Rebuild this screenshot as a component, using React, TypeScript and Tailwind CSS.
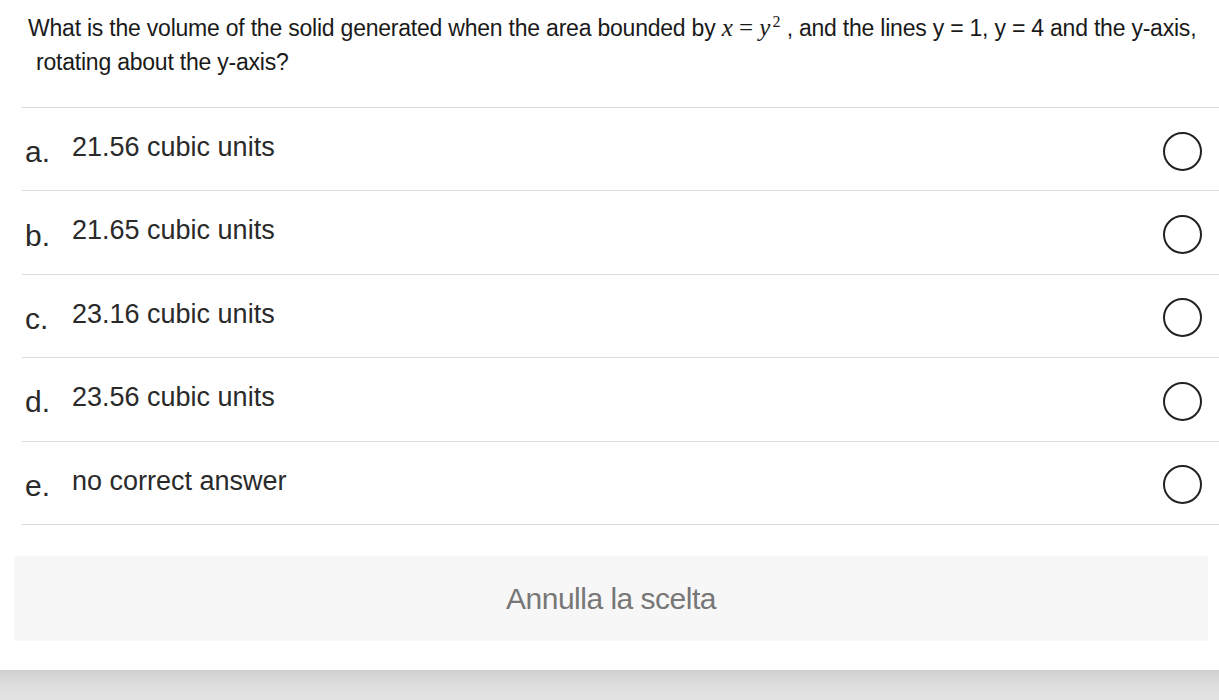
import React from 'react';

const options = [
  { letter: 'a.', text: '21.56 cubic units' },
  { letter: 'b.', text: '21.65 cubic units' },
  { letter: 'c.', text: '23.16 cubic units' },
  { letter: 'd.', text: '23.56 cubic units' },
  { letter: 'e.', text: 'no correct answer' },
];

function Question() {
  return (
    <div className="pl-[28px] pr-4 pt-[11px] text-[23px] leading-[34px] text-[#1a1a1a] tracking-[-0.22px] font-['Liberation_Sans',Arial,sans-serif]">
      <div className="whitespace-nowrap">
        What is the volume of the solid generated when the area bounded by{' '}
        <span className="font-['Liberation_Serif',serif] text-[25px] tracking-normal">
          <i>x</i> = <i>y</i>
          <sup className="text-[16px] relative -top-[9px] ml-[2px]">2</sup>
        </span>{' '}
        , and the lines y = 1, y = 4 and the y-axis,
      </div>
      <div className="pl-[8px]">rotating about the y-axis?</div>
    </div>
  );
}

function OptionRow({ letter, text }: { letter: string; text: string }) {
  return (
    <div className="flex h-[83.4px] items-center border-b border-[#dcdcdc] pl-[3px] pr-[17px]">
      <span className="w-[47px] pt-[5px] text-[30px] text-[#2a2a2a]">{letter}</span>
      <span className="flex-1 text-[27px] text-[#2a2a2a] -mt-[4px]">{text}</span>
      <span className="h-[39px] w-[39px] rounded-full border-2 border-[#222] mt-[4px]" />
    </div>
  );
}

export default function App() {
  return (
    <div className="w-[1219px] h-[700px] overflow-hidden bg-white font-['Liberation_Sans',Arial,sans-serif]">
      <div className="h-[670px]">
        <Question />
        <div className="ml-[22px] mt-[28px] border-t border-[#dcdcdc]">
          {options.map(o => (
            <OptionRow key={o.letter} letter={o.letter} text={o.text} />
          ))}
        </div>
        <div className="ml-[14px] mr-[11px] mt-[31px] flex h-[85px] items-center justify-center bg-[#f7f7f7]">
          <span className="text-[30px] text-[#777] tracking-[-0.5px]">Annulla la scelta</span>
        </div>
      </div>
      <div className="h-[30px] bg-gradient-to-b from-[#cfcfcf] via-[#dedede] to-[#e2e2e2]" />
    </div>
  );
}
